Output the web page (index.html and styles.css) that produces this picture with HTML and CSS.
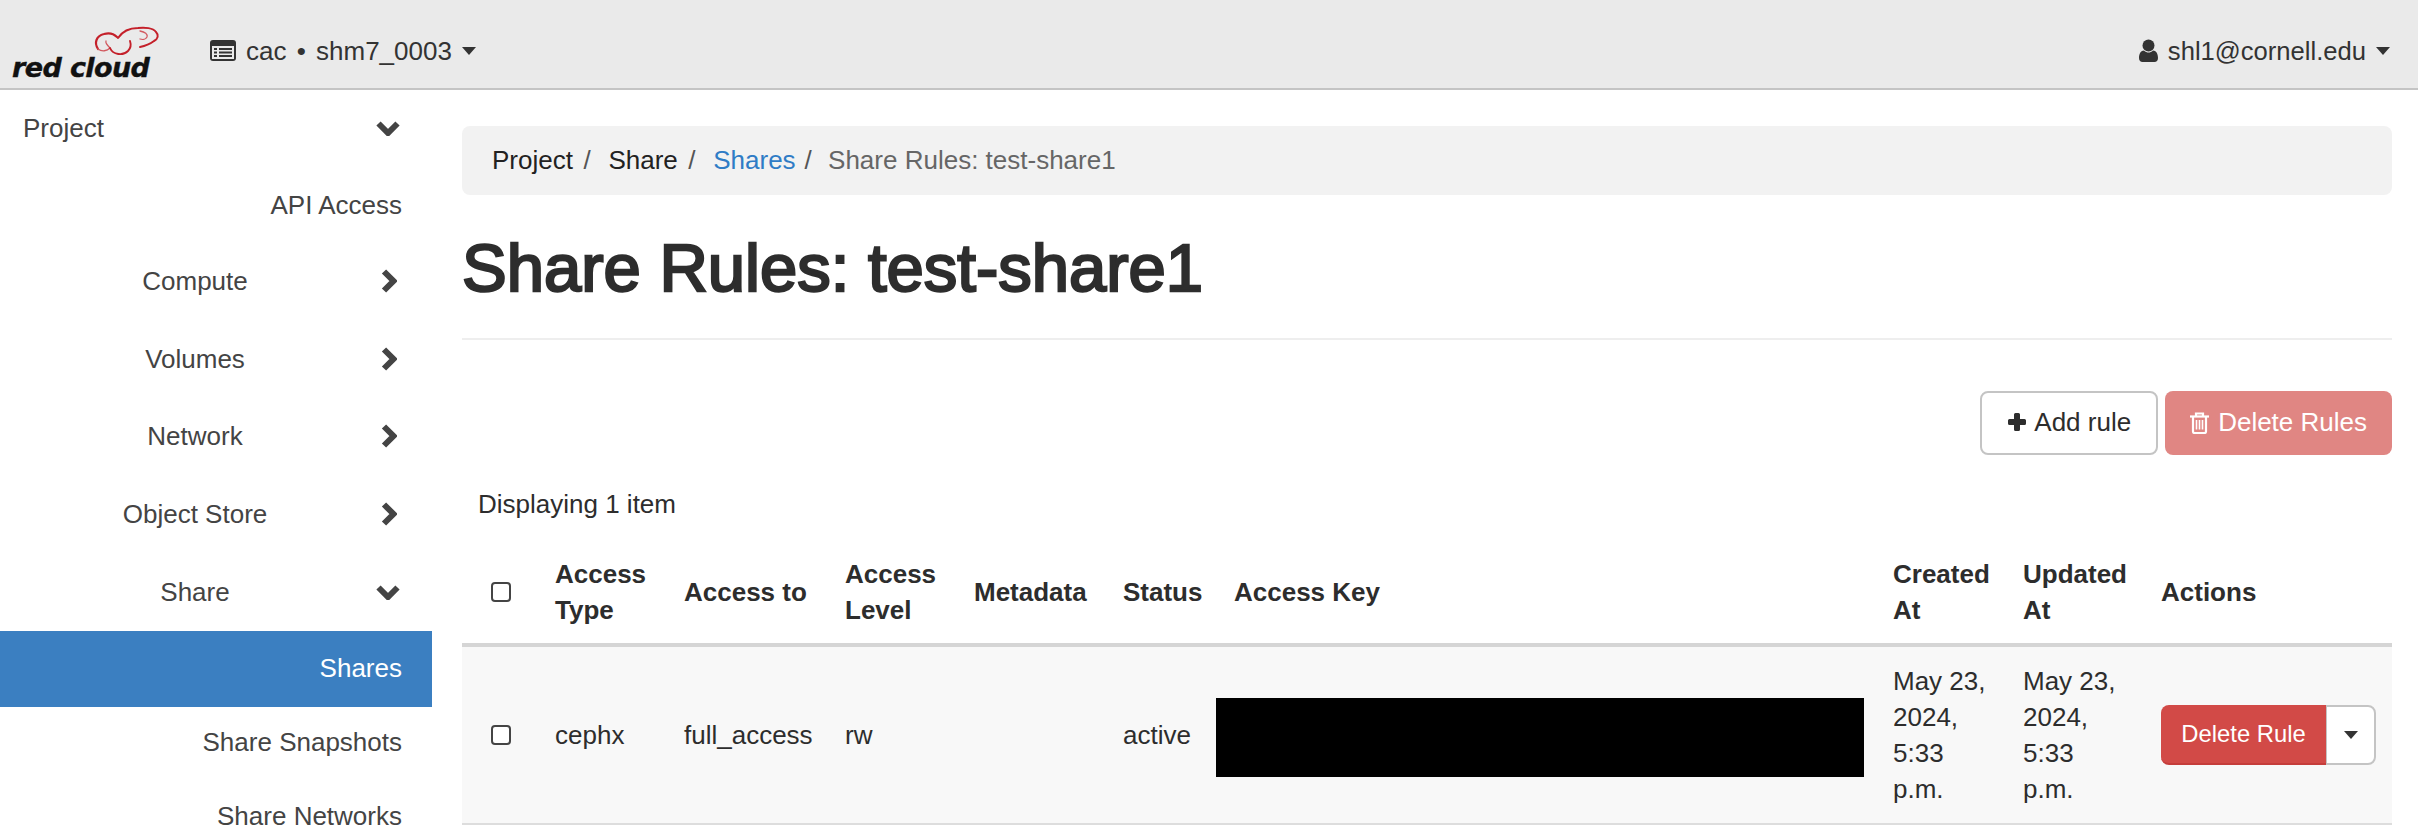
FILE: index.html
```html
<!DOCTYPE html>
<html lang="en">
<head>
<meta charset="utf-8">
<title>Share Rules: test-share1</title>
<link rel="stylesheet" href="styles.css">
</head>
<body>
<header class="navbar">
  <a class="logo">
    <svg class="cloud" viewBox="0 0 80 36" width="80" height="36" fill="none" stroke-linecap="round">
      <path d="M13 26C9 20 11 13 19 11C24 9.500 29 11 32 14" stroke="#c4202a" stroke-width="2.200"/>
      <path d="M13 26C17 29 22 28 25 25C22 22 20 20 21 18" stroke="#d25a60" stroke-width="1.300"/>
      <path d="M25 25C28 32 38 33 43 28C46 25 46 21 45 18" stroke="#c4202a" stroke-width="1.900"/>
      <path d="M33 15C37 9 43 5 53 5C60 4 68 5 71 9C74 12 73 16 69 18C65 21 60 23 55 24" stroke="#c4202a" stroke-width="2"/>
      <path d="M55 8C60 9 63 11 62 14C61 16 58 17 55 16" stroke="#d25a60" stroke-width="1.300"/>
    </svg>
    <span class="logo-text">red cloud</span>
  </a>
  <div class="nav-item">
    <svg class="ico-list" viewBox="0 0 26 21" width="26" height="21">
      <rect width="26" height="21" rx="3" fill="#333"/>
      <rect x="2" y="6" width="22" height="13" fill="#eaeaea"/>
      <path d="M4 8h3v2H4zM4 11.500h3v2H4zM4 15h3v2H4zM9 8h13v2H9zM9 11.500h13v2H9zM9 15h13v2H9z" fill="#333"/>
    </svg>
    <span class="project-name">cac • shm7_0003</span>
    <i class="caret"></i>
  </div>
  <div class="nav-item nav-user">
    <svg class="ico-user" viewBox="0 0 19 23" width="19" height="23">
      <circle cx="9.500" cy="6.500" r="6" fill="#333"/>
      <path d="M0 19C0 14.500 2 11.500 5 11.500C6.500 13 8 13.500 9.500 13.500C11 13.500 12.500 13 14 11.500C17 11.500 19 14.500 19 19C19 21.500 17.500 23 15.500 23H3.500C1.500 23 0 21.500 0 19Z" fill="#333"/>
    </svg>
    <span class="user-name">shl1@cornell.edu</span>
    <i class="caret"></i>
  </div>
</header>
<div class="layout">
  <nav class="sidebar">
    <div class="side-row side-top"><span>Project</span>
      <svg class="chev-down" viewBox="0 0 24 16" width="24" height="16"><polyline points="2.500,3.500 12,13 21.500,3.500"/></svg></div>
    <div class="side-sub side-api">API Access</div>
    <div class="side-row"><span>Compute</span>
      <svg class="chev-right" viewBox="0 0 16 24" width="16" height="24"><polyline points="3,2.500 12.500,12 3,21.500"/></svg></div>
    <div class="side-row"><span>Volumes</span>
      <svg class="chev-right" viewBox="0 0 16 24" width="16" height="24"><polyline points="3,2.500 12.500,12 3,21.500"/></svg></div>
    <div class="side-row"><span>Network</span>
      <svg class="chev-right" viewBox="0 0 16 24" width="16" height="24"><polyline points="3,2.500 12.500,12 3,21.500"/></svg></div>
    <div class="side-row"><span>Object Store</span>
      <svg class="chev-right" viewBox="0 0 16 24" width="16" height="24"><polyline points="3,2.500 12.500,12 3,21.500"/></svg></div>
    <div class="side-row"><span>Share</span>
      <svg class="chev-down" viewBox="0 0 24 16" width="24" height="16"><polyline points="2.500,3.500 12,13 21.500,3.500"/></svg></div>
    <div class="side-sub side-active">Shares</div>
    <div class="side-sub">Share Snapshots</div>
    <div class="side-sub">Share Networks</div>
  </nav>
  <main class="content">
    <ol class="breadcrumb">
      <li>Project</li>
      <li>Share</li>
      <li class="crumb-link">Shares</li>
      <li class="crumb-current">Share Rules: test-share1</li>
    </ol>
    <h1 class="page-title">Share Rules: test-share1</h1>
    <div class="actions">
      <button class="btn btn-default">
        <svg viewBox="0 0 20 20" width="20" height="20"><path d="M7 2.500A1.500 1.500 0 0 1 8.500 1h3A1.500 1.500 0 0 1 13 2.500V7h4.500A1.500 1.500 0 0 1 19 8.500v3a1.500 1.500 0 0 1-1.500 1.500H13v4.500a1.500 1.500 0 0 1-1.500 1.500h-3A1.500 1.500 0 0 1 7 17.500V13H2.500A1.500 1.500 0 0 1 1 11.500v-3A1.500 1.500 0 0 1 2.500 7H7z" fill="#2d2d2d"/></svg>
        <span>Add rule</span>
      </button>
      <button class="btn btn-danger-dim">
        <svg viewBox="0 0 19 23" width="19" height="23" fill="none" stroke="#fff"><path d="M0 5.500H19" stroke-width="2.200"/><path d="M6 5V2.500H13V5" stroke-width="2.200"/><path d="M3 5.500V20.500A1.500 1.500 0 0 0 4.500 22H14.500A1.500 1.500 0 0 0 16 20.500V5.500" stroke-width="2.200"/><path d="M6.500 9V18.500M9.500 9V18.500M12.500 9V18.500" stroke-width="1.600"/></svg>
        <span>Delete Rules</span>
      </button>
    </div>
    <div class="count">Displaying 1 item</div>
    <table class="rules">
      <colgroup>
        <col class="c-check"><col class="c-type"><col class="c-to"><col class="c-level"><col class="c-meta"><col class="c-status"><col class="c-key"><col class="c-created"><col class="c-updated"><col class="c-actions">
      </colgroup>
      <thead>
        <tr>
          <th class="cell-check"><input class="check" type="checkbox"></th>
          <th>Access Type</th>
          <th>Access to</th>
          <th>Access Level</th>
          <th>Metadata</th>
          <th>Status</th>
          <th>Access Key</th>
          <th>Created At</th>
          <th>Updated At</th>
          <th>Actions</th>
        </tr>
      </thead>
      <tbody>
        <tr>
          <td class="cell-check"><input class="check" type="checkbox"></td>
          <td>cephx</td>
          <td>full_access</td>
          <td>rw</td>
          <td></td>
          <td>active</td>
          <td class="cell-key"><div class="redacted"></div></td>
          <td>May 23, 2024, 5:33 p.m.</td>
          <td>May 23, 2024, 5:33 p.m.</td>
          <td>
            <div class="btn-group">
              <button class="btn-del">Delete Rule</button>
              <button class="btn-toggle"><i class="caret"></i></button>
            </div>
          </td>
        </tr>
      </tbody>
    </table>
  </main>
</div>
</body>
</html>
```
FILE: styles.css
```css
* { box-sizing: border-box; }
html, body { margin: 0; padding: 0; }
body {
  width: 2418px;
  height: 834px;
  overflow: hidden;
  background: #fff;
  color: #2d2d2d;
  font-family: "Liberation Sans", Arial, sans-serif;
  font-size: 26px;
  line-height: 36px;
}
.navbar {
  display: flex;
  align-items: center;
  height: 90px;
  background: #eaeaea;
  border-bottom: 2px solid #c4c4c4;
  padding-right: 28px;
  color: #333;
}
.logo {
  position: relative;
  display: block;
  flex: 0 0 210px;
  height: 88px;
  padding: 52px 0 0 12px;
}
.logo-text {
  display: block;
  font-family: "DejaVu Sans", sans-serif;
  font-weight: 700;
  font-style: italic;
  font-size: 27px;
  line-height: 32px;
  letter-spacing: -0.6px;
  color: #111;
  -webkit-text-stroke: 0.4px #111;
  white-space: nowrap;
}
.cloud { position: absolute; left: 85px; top: 23px; }
.nav-item { display: flex; align-items: center; margin-top: 13px; }
.nav-user { margin-left: auto; }
.project-name { word-spacing: 3px; }
.user-name { font-size: 25.6px; }
.ico-list { margin-right: 10px; }
.ico-user { margin-right: 10px; }
.caret {
  display: block;
  width: 0;
  height: 0;
  margin-left: 10px;
  border-style: solid;
  border-width: 8px 7.5px 0;
  border-color: #333 transparent transparent;
}
.layout { display: flex; height: 744px; }
.sidebar { flex: 0 0 432px; color: #444; overflow: hidden; }
.side-row {
  display: flex;
  align-items: center;
  height: 77.6px;
  padding-bottom: 1px;
}
.side-row span { flex: 0 0 390px; text-align: center; }
.side-row .chev-down { margin-left: -14px; }
.side-row .chev-right { margin-left: -9px; }
.side-top { height: 76px; padding-left: 23px; padding-bottom: 0; }
.side-top span { flex: 0 0 353px; text-align: left; }
.side-top .chev-down { margin-left: 0; }
.chev-down, .chev-right { fill: none; stroke: #444; stroke-width: 6; }
.side-sub {
  display: flex;
  align-items: center;
  justify-content: flex-end;
  height: 74px;
  padding: 0 30px 3px 0;
}
.side-api { height: 77px; padding-bottom: 0; }
.side-active { height: 76px; padding-bottom: 2px; background: #3b7fc1; color: #fff; }
.content { flex: 1; min-width: 0; padding: 36px 26px 0 30px; }
.breadcrumb {
  display: flex;
  list-style: none;
  margin: 0;
  height: 69px;
  padding: 16px 30px;
  background: #f2f2f2;
  border-radius: 8px;
  color: #222;
}
.breadcrumb li + li::before {
  content: "/\00a0";
  padding: 0 10.5px;
  color: #555;
}
.breadcrumb .crumb-current::before { padding: 0 9px; }
.crumb-link { color: #2f7cc6; }
.crumb-current { color: #666; }
.page-title {
  margin: 36px 0 0;
  padding-bottom: 33px;
  border-bottom: 2px solid #eee;
  font-size: 67px;
  line-height: 74px;
  font-weight: 400;
  -webkit-text-stroke: 2.4px #2d2d2d;
  height: 109px;
}
.actions {
  display: flex;
  justify-content: flex-end;
  gap: 7px;
  margin-top: 51px;
}
.btn {
  display: flex;
  align-items: center;
  gap: 7px;
  height: 64px;
  font: inherit;
  border-radius: 8px;
  padding: 0 25px 2px;
}
.btn-default { background: #fff; border: 2px solid #c4c4c4; color: #2d2d2d; }
.btn-danger-dim { background: #e08683; border: 0; color: #fff; gap: 9px; }
.count { margin-top: 31px; padding-left: 16px; }
.rules {
  width: 1930px;
  margin-top: 19px;
  table-layout: fixed;
  border-collapse: separate;
  border-spacing: 0;
}
.c-check { width: 75px; }
.c-type { width: 129px; }
.c-to { width: 161px; }
.c-level { width: 129px; }
.c-meta { width: 149px; }
.c-status { width: 111px; }
.c-key { width: 659px; }
.c-created { width: 130px; }
.c-updated { width: 138px; }
.c-actions { width: 249px; }
.rules th, .rules td {
  padding: 15px 18px;
  text-align: left;
  vertical-align: middle;
}
.rules th { border-bottom: 4px solid #d5d5d5; font-weight: 700; }
.rules td { padding: 16px 18px; background: #f8f8f8; border-bottom: 2px solid #ddd; }
.rules .cell-check { padding-left: 29px; padding-right: 0; }
.rules .cell-key { padding: 0; }
.check {
  appearance: none;
  display: block;
  width: 20px;
  height: 20px;
  margin: 0;
  border: 2px solid #444;
  border-radius: 4px;
  background: #fff;
}
.redacted { width: 648px; height: 79px; margin-top: 5px; background: #000; }
.btn-group { display: flex; width: 215px; height: 60px; }
.btn-del {
  flex: none;
  width: 165px;
  font: inherit;
  font-size: 23.8px;
  color: #fff;
  background: #d24a47;
  border: 0;
  border-bottom: 2px solid #c53d3b;
  border-radius: 8px 0 0 8px;
  padding: 0;
}
.btn-toggle {
  flex: none;
  width: 50px;
  display: flex;
  align-items: center;
  justify-content: center;
  background: #fff;
  border: 2px solid #c4c4c4;
  border-left-width: 1px;
  border-radius: 0 8px 8px 0;
  padding: 0;
}
.btn-toggle .caret { margin: 0; }
```
